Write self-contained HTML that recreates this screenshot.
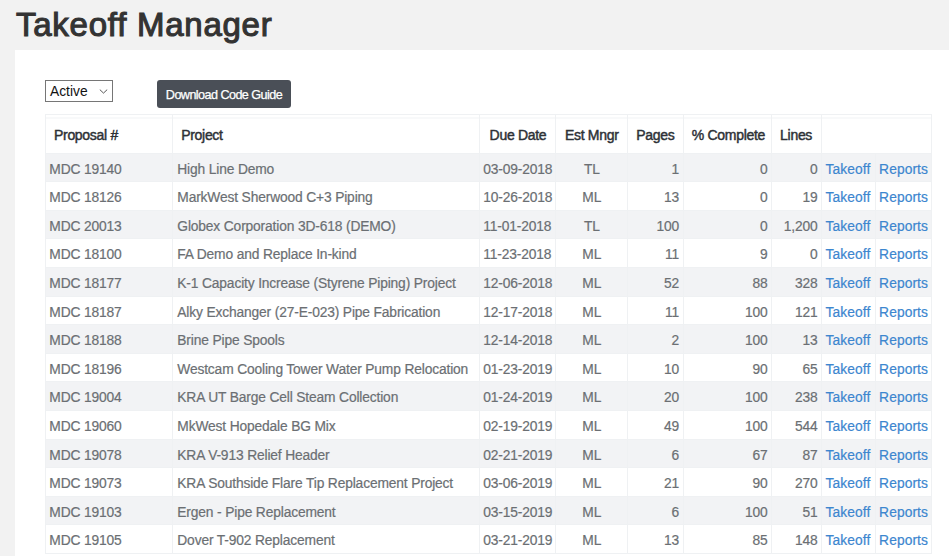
<!DOCTYPE html>
<html><head><meta charset="utf-8">
<style>
html,body{margin:0;padding:0;}
body{width:949px;height:556px;overflow:hidden;background:#f2f2f2;position:relative;font-family:"Liberation Sans",sans-serif;}
h1{position:absolute;left:16px;top:1.5px;margin:0;font-size:33px;font-weight:normal;-webkit-text-stroke:1.1px #333;color:#333;line-height:46px;letter-spacing:0.75px;}
.panel{position:absolute;left:15px;top:50px;width:934px;height:506px;background:#fff;}
.sel{position:absolute;left:45px;top:80px;width:66px;height:20px;border:1px solid #767676;background:#fff;box-sizing:content-box;}
.sel span{position:absolute;left:4px;top:0.8px;font-size:13.8px;line-height:20px;color:#111;}
.sel svg{position:absolute;left:53.3px;top:8.2px;}
.btn{position:absolute;left:157px;top:80px;width:134px;height:27.5px;background:#4a4f57;border-radius:3px;color:#fff;font-size:12.6px;letter-spacing:-0.55px;-webkit-text-stroke:0.25px #fff;line-height:30px;text-align:center;}
table{position:absolute;left:44.8px;top:113.5px;border-collapse:collapse;table-layout:fixed;width:886px;}
td,th{border:1px solid #eff1f3;padding:0;white-space:nowrap;overflow:hidden;}
th{height:39.2px;text-align:left;font-weight:normal;-webkit-text-stroke:0.45px #2d3136;font-size:14px;letter-spacing:-0.3px;color:#2d3136;padding-left:9px;padding-top:2.6px;box-sizing:border-box;}
td{height:28.6px;font-size:13.8px;letter-spacing:-0.15px;color:#6b6f73;-webkit-text-stroke:0.2px currentColor;padding-left:3.5px;padding-right:3.8px;padding-top:3.4px;box-sizing:border-box;}
tr.s td{background:#f2f3f5;}
thead th{background:linear-gradient(#fff 0,#fff 3px,#f1f2f4 3px,#f1f2f4 4px,#fff 4px);}
td.p{padding-left:4.5px;}
td.c{text-align:center;padding-left:0;padding-right:0;}
td.r{text-align:right;}
td.l{color:#3c86cf;padding-left:3.3px;letter-spacing:0.08px;}
</style></head><body>
<h1>Takeoff Manager</h1>
<div class="panel"></div>
<div class="sel"><span>Active</span><svg width="9" height="5" viewBox="0 0 9 5"><path d="M0.8 0.6 L4.5 4.1 L8.2 0.6" fill="none" stroke="#444" stroke-width="0.9"/></svg></div>
<div class="btn">Download Code Guide</div>
<table>
<colgroup><col style="width:127px"><col style="width:307px"><col style="width:76.5px"><col style="width:72px"><col style="width:55.5px"><col style="width:88.5px"><col style="width:50px"><col style="width:53.5px"><col style="width:56px"></colgroup>
<thead><tr><th style="padding-left:8.2px">Proposal #</th><th style="padding-left:8.4px">Project</th><th style="padding-left:9.8px">Due Date</th><th style="padding-left:8.6px">Est Mngr</th><th style="padding-left:7.9px">Pages</th><th style="padding-left:8px">% Complete</th><th style="padding-left:7.8px">Lines</th><th colspan="2"></th></tr></thead>
<tbody>
<tr class="s"><td>MDC 19140</td><td class="p">High Line Demo</td><td>03-09-2018</td><td class="c">TL</td><td class="r">1</td><td class="r">0</td><td class="r">0</td><td class="l">Takeoff</td><td class="l">Reports</td></tr>
<tr><td>MDC 18126</td><td class="p">MarkWest Sherwood C+3 Piping</td><td>10-26-2018</td><td class="c">ML</td><td class="r">13</td><td class="r">0</td><td class="r">19</td><td class="l">Takeoff</td><td class="l">Reports</td></tr>
<tr class="s"><td>MDC 20013</td><td class="p">Globex Corporation 3D-618 (DEMO)</td><td>11-01-2018</td><td class="c">TL</td><td class="r">100</td><td class="r">0</td><td class="r">1,200</td><td class="l">Takeoff</td><td class="l">Reports</td></tr>
<tr><td>MDC 18100</td><td class="p">FA Demo and Replace In-kind</td><td>11-23-2018</td><td class="c">ML</td><td class="r">11</td><td class="r">9</td><td class="r">0</td><td class="l">Takeoff</td><td class="l">Reports</td></tr>
<tr class="s"><td>MDC 18177</td><td class="p">K-1 Capacity Increase (Styrene Piping) Project</td><td>12-06-2018</td><td class="c">ML</td><td class="r">52</td><td class="r">88</td><td class="r">328</td><td class="l">Takeoff</td><td class="l">Reports</td></tr>
<tr><td>MDC 18187</td><td class="p">Alky Exchanger (27-E-023) Pipe Fabrication</td><td>12-17-2018</td><td class="c">ML</td><td class="r">11</td><td class="r">100</td><td class="r">121</td><td class="l">Takeoff</td><td class="l">Reports</td></tr>
<tr class="s"><td>MDC 18188</td><td class="p">Brine Pipe Spools</td><td>12-14-2018</td><td class="c">ML</td><td class="r">2</td><td class="r">100</td><td class="r">13</td><td class="l">Takeoff</td><td class="l">Reports</td></tr>
<tr><td>MDC 18196</td><td class="p">Westcam Cooling Tower Water Pump Relocation</td><td>01-23-2019</td><td class="c">ML</td><td class="r">10</td><td class="r">90</td><td class="r">65</td><td class="l">Takeoff</td><td class="l">Reports</td></tr>
<tr class="s"><td>MDC 19004</td><td class="p">KRA UT Barge Cell Steam Collection</td><td>01-24-2019</td><td class="c">ML</td><td class="r">20</td><td class="r">100</td><td class="r">238</td><td class="l">Takeoff</td><td class="l">Reports</td></tr>
<tr><td>MDC 19060</td><td class="p">MkWest Hopedale BG Mix</td><td>02-19-2019</td><td class="c">ML</td><td class="r">49</td><td class="r">100</td><td class="r">544</td><td class="l">Takeoff</td><td class="l">Reports</td></tr>
<tr class="s"><td>MDC 19078</td><td class="p">KRA V-913 Relief Header</td><td>02-21-2019</td><td class="c">ML</td><td class="r">6</td><td class="r">67</td><td class="r">87</td><td class="l">Takeoff</td><td class="l">Reports</td></tr>
<tr><td>MDC 19073</td><td class="p">KRA Southside Flare Tip Replacement Project</td><td>03-06-2019</td><td class="c">ML</td><td class="r">21</td><td class="r">90</td><td class="r">270</td><td class="l">Takeoff</td><td class="l">Reports</td></tr>
<tr class="s"><td>MDC 19103</td><td class="p">Ergen - Pipe Replacement</td><td>03-15-2019</td><td class="c">ML</td><td class="r">6</td><td class="r">100</td><td class="r">51</td><td class="l">Takeoff</td><td class="l">Reports</td></tr>
<tr><td>MDC 19105</td><td class="p">Dover T-902 Replacement</td><td>03-21-2019</td><td class="c">ML</td><td class="r">13</td><td class="r">85</td><td class="r">148</td><td class="l">Takeoff</td><td class="l">Reports</td></tr>
</tbody></table>
</body></html>
